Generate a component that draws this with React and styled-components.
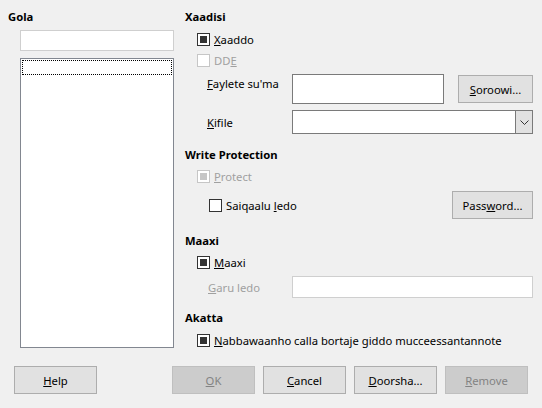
import React from 'react'
import styled, { createGlobalStyle } from 'styled-components'

const GlobalStyle = createGlobalStyle`
  html, body { margin:0; padding:0; background:#f0f0f0; }
  body { font-family:"Noto Sans", "Open Sans", sans-serif; font-size:11.25px; color:#000; }
  u { text-underline-offset:1px; }
`

const Dialog = styled.div`
  width:542px;
  height:408px;
  background:#f0f0f0;
  box-sizing:border-box;
  display:flex;
  flex-direction:column;
`
const Main = styled.div`
  display:flex;
  gap:12px;
  padding:9px 9px 0 8px;
  height:357px;
  box-sizing:border-box;
`
const LeftCol = styled.div`
  width:165px;
  display:flex;
  flex-direction:column;
`
const RightCol = styled.div`
  width:348px;
  display:flex;
  flex-direction:column;
`
const Heading = styled.div`
  font-weight:700;
  line-height:16px;
  height:16px;
  margin-top:${p => p.$mt || 0}px;
`
const SearchInput = styled.div`
  margin:5px 0 0 12px;
  height:21px;
  width:154px;
  box-sizing:border-box;
  background:#fff;
  border:1px solid #cfcfcf;
`
const ListBox = styled.div`
  margin:7px 0 0 12px;
  height:290px;
  width:154px;
  box-sizing:border-box;
  background:#fff;
  border:1px solid #828790;
  padding:1px;
`
const FocusRow = styled.div`
  height:15px;
  box-sizing:border-box;
  border:1px dotted #000;
`
const CheckRow = styled.label`
  display:flex;
  align-items:center;
  gap:4px;
  height:21px;
  margin-left:${p => p.$indent || 12}px;
  color:${p => p.$disabled ? '#a0a0a0' : '#000'};
`
const Box = styled.span`
  width:13px;
  height:13px;
  box-sizing:border-box;
  border:1px solid ${p => p.$disabled ? '#c6c6c6' : '#333'};
  background:#fff;
  display:flex;
  align-items:center;
  justify-content:center;
  flex:none;
  &::after{
    content:"";
    display:${p => p.$checked ? 'block' : 'none'};
    width:7px;
    height:7px;
    background:${p => p.$disabled ? '#c6c6c6' : '#333'};
  }
`
const FieldRow = styled.div`
  display:flex;
  align-items:${p => p.$top ? 'flex-start' : 'center'};
  margin-top:${p => p.$mt || 0}px;
  height:${p => p.$h}px;
`
const FieldLabel = styled.span`
  width:${p => 107 - p.$indent}px;
  margin-left:${p => p.$indent}px;
  padding-top:${p => p.$top ? 2 : 0}px;
  color:${p => p.$disabled ? '#a0a0a0' : '#000'};
  flex:none;
`
const TextInput = styled.div`
  width:${p => p.$w}px;
  height:${p => p.$h}px;
  box-sizing:border-box;
  background:#fff;
  border:1px solid ${p => p.$disabled ? '#cfcfcf' : '#7a7a7a'};
  flex:none;
`
const Select = styled.div`
  width:241px;
  height:24px;
  box-sizing:border-box;
  background:#fff;
  border:1px solid #7a7a7a;
  display:flex;
  justify-content:flex-end;
`
const DropBtn = styled.div`
  width:16px;
  background:#e1e1e1;
  border-left:1px solid #7a7a7a;
  display:flex;
  align-items:center;
  justify-content:center;
`
const Spacer = styled.div`
  flex:1;
`
const Button = styled.div`
  width:${p => p.$w || 83}px;
  height:28px;
  box-sizing:border-box;
  background:${p => p.$disabled ? '#cccccc' : '#e1e1e1'};
  border:1px solid ${p => p.$disabled ? '#bfbfbf' : '#adadad'};
  color:${p => p.$disabled ? '#838383' : '#000'};
  display:flex;
  align-items:center;
  justify-content:center;
  flex:none;
  margin-top:${p => p.$mt || 0}px;
`
const Footer = styled.div`
  display:flex;
  justify-content:space-between;
  padding:9px 14px 0 14px;
`
const ButtonGroup = styled.div`
  display:flex;
  gap:8px;
`
const Gap = styled.div`
  height:${p => p.$h}px;
`

const App = () => {
  return (
    <Dialog>
      <GlobalStyle/>
      <Main>
        <LeftCol>
          <Heading>Gola</Heading>
          <SearchInput/>
          <ListBox>
            <FocusRow/>
          </ListBox>
        </LeftCol>
        <RightCol>
          <Heading>Xaadisi</Heading>
          <Gap $h={4}/>
          <CheckRow><Box $checked/><span><u>X</u>aaddo</span></CheckRow>
          <CheckRow $disabled><Box $disabled/><span>DD<u>E</u></span></CheckRow>
          <FieldRow $top $mt={3} $h={30}>
            <FieldLabel $indent={22} $top><u>F</u>aylete su'ma</FieldLabel>
            <TextInput $w={152} $h={30}/>
            <Spacer/>
            <Button $w={75} $mt={1}><span><u>S</u>oroowi...</span></Button>
          </FieldRow>
          <FieldRow $mt={6} $h={24}>
            <FieldLabel $indent={22}><u>K</u>ifile</FieldLabel>
            <Select>
              <DropBtn>
                <svg width="9" height="5" viewBox="0 0 9 5"><path d="M0.5 0.5 L4.5 4.5 L8.5 0.5" fill="none" stroke="#333" strokeWidth="1"/></svg>
              </DropBtn>
            </Select>
          </FieldRow>
          <Heading $mt={13}>Write Protection</Heading>
          <Gap $h={3}/>
          <CheckRow $disabled><Box $disabled $checked/><span><u>P</u>rotect</span></CheckRow>
          <FieldRow $mt={4} $h={28}>
            <CheckRow $indent={24}><Box/><span>Saiqaalu <u>l</u>edo</span></CheckRow>
            <Spacer/>
            <Button $w={81}><span>Pass<u>w</u>ord...</span></Button>
          </FieldRow>
          <Heading $mt={14}>Maaxi</Heading>
          <Gap $h={3}/>
          <CheckRow><Box $checked/><span><u>M</u>aaxi</span></CheckRow>
          <FieldRow $mt={3} $h={22}>
            <FieldLabel $indent={23} $disabled><u>G</u>aru ledo</FieldLabel>
            <TextInput $w={241} $h={22} $disabled/>
          </FieldRow>
          <Heading $mt={12}>Akatta</Heading>
          <Gap $h={4}/>
          <CheckRow><Box $checked/><span><u>N</u>abbawaanho calla bortaje giddo mucceessantannote</span></CheckRow>
        </RightCol>
      </Main>
      <Footer>
        <Button><span><u>H</u>elp</span></Button>
        <ButtonGroup>
          <Button $disabled><span><u>O</u>K</span></Button>
          <Button><span><u>C</u>ancel</span></Button>
          <Button><span><u>D</u>oorsha...</span></Button>
          <Button $disabled><span><u>R</u>emove</span></Button>
        </ButtonGroup>
      </Footer>
    </Dialog>
  )
}

export default App
